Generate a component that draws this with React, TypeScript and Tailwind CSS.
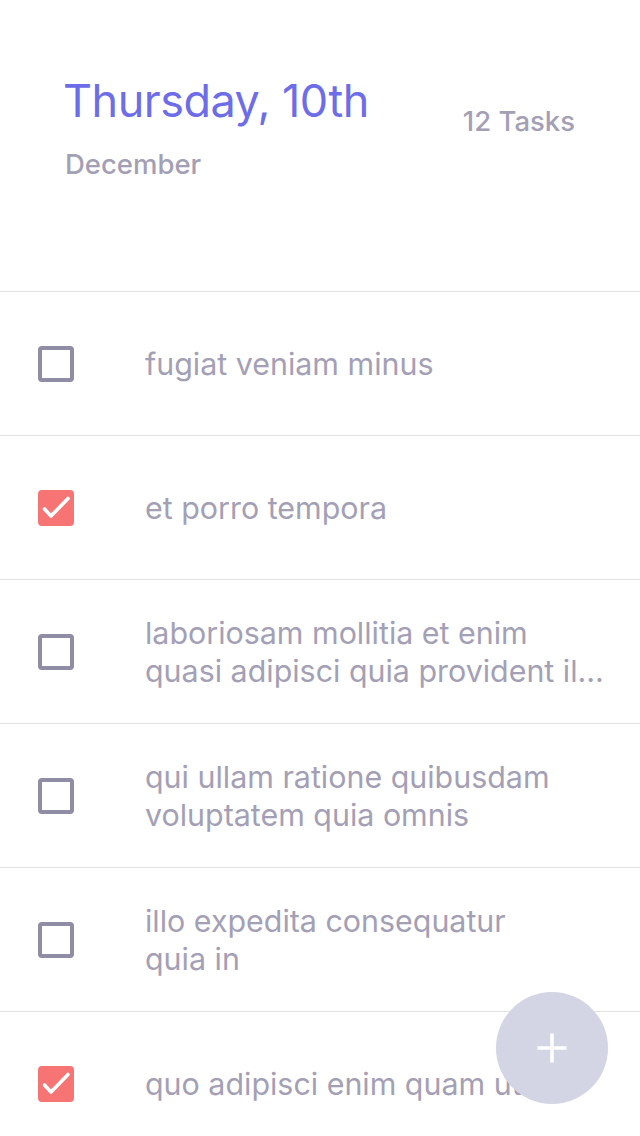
import { ReactNode } from 'react';

// ============================================================
// DATA
// ============================================================

interface Task {
  id: number;
  // lines as the list lays them out
  lines: string[];
  done: boolean;
}

const TASKS: Task[] = [
  { id: 1, lines: ['fugiat veniam minus'], done: false },
  { id: 2, lines: ['et porro tempora'], done: true },
  { id: 3, lines: ['laboriosam mollitia et enim', 'quasi adipisci quia provident illum'], done: false },
  { id: 4, lines: ['qui ullam ratione quibusdam', 'voluptatem quia omnis'], done: false },
  { id: 5, lines: ['illo expedita consequatur', 'quia in'], done: false },
  { id: 6, lines: ['quo adipisci enim quam ut ab'], done: true },
];

// ============================================================
// PIECES
// ============================================================

function Checkbox({ checked }: { checked: boolean }) {
  if (checked) {
    return (
      <div className="w-[36px] h-[36px] shrink-0 rounded-[4px] bg-[#f77474]">
        <svg width="36" height="36" viewBox="0 0 36 36" fill="none">
          <path d="M6.5 19l6.5 7L30 8.5" stroke="#fff" strokeWidth={3.6} strokeLinecap="round" strokeLinejoin="round" />
        </svg>
      </div>
    );
  }
  return <div className="w-[36px] h-[36px] shrink-0 rounded-[4px] border-[4px] border-[#8f8ca6]" />;
}

function Row({ children }: { children: ReactNode }) {
  return (
    <div className="flex items-center h-[144px] shrink-0 border-b border-[#e2e2e6] pl-[38px] pr-[35px]">
      {children}
    </div>
  );
}

// ============================================================
// APP
// ============================================================

export default function App() {
  return (
    <div
      className="relative w-[640px] h-[1136px] overflow-hidden bg-white flex flex-col"
      style={{ fontFamily: 'Inter, "Noto Sans", sans-serif' }}
    >
      {/* Header */}
      <div className="h-[292px] shrink-0 border-b border-[#e2e2e6] flex justify-between items-start pl-[63px] pr-[65px]">
        <div className="flex flex-col pt-[78px]">
          <h1 className="text-[#6d6de9] text-[45px] leading-none tracking-[-0.5px]">Thursday, 10th</h1>
          <p className="text-[#a3a0b6] text-[27.5px] leading-none font-medium mt-[28px] ml-[2px]">December</p>
        </div>
        <p className="text-[#a3a0b6] text-[27.5px] leading-none font-medium pt-[108px]">12 Tasks</p>
      </div>

      {/* Task list */}
      {TASKS.map((task) => (
        <Row key={task.id}>
          <Checkbox checked={task.done} />
          <div className="ml-[71px] min-w-0 flex-1 text-[#a3a0b6] text-[30.4px] leading-[38px]">
            {task.lines.map((line) => (
              <p key={line} className="whitespace-nowrap overflow-hidden text-ellipsis">{line}</p>
            ))}
          </div>
        </Row>
      ))}

      {/* Add button */}
      <button className="absolute left-[496px] top-[992px] w-[112px] h-[112px] rounded-full bg-[#d3d4e4] flex items-center justify-center">
        <svg width="30" height="30" viewBox="0 0 30 30" fill="none">
          <path d="M15 0.5v29M0.5 15h29" stroke="#fff" strokeWidth={3.5} />
        </svg>
      </button>
    </div>
  );
}
